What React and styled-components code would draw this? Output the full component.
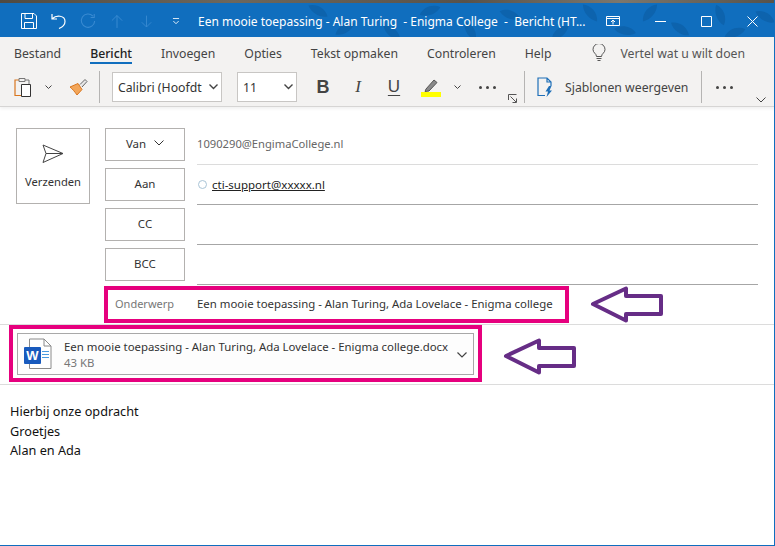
import React from "react";
import styled, { createGlobalStyle } from "styled-components";

const tabs = ["Bestand", "Bericht", "Invoegen", "Opties", "Tekst opmaken", "Controleren", "Help"];
const leaves = [
  [318, 8, 30], [345, 26, -30], [392, 30, 40], [430, 8, -20], [470, 28, 60], [510, 12, 20],
  [560, 30, -40], [590, 10, 50], [625, 28, 10], [650, 10, -50], [680, 26, 35], [720, 12, 70],
  [735, 30, -20], [765, 14, 30]
];

const App = () => {
  return (
    <Page>
      <GlobalStyle />
      <PhotoStrip />
      <TitleBar>
        <LeafLayer width="775" height="34" viewBox="0 0 775 34">
          {leaves.map(([x, y, r]) => (
            <path
              key={x}
              d="M-11 0C-5-6 5-6 11 0C5 5-5 5-11 0Z"
              fill="#0d63ad"
              transform={`translate(${x} ${y}) rotate(${r})`}
            />
          ))}
        </LeafLayer>
        <QuickIcons>
          <svg width="16" height="16" viewBox="0 0 16 16" fill="none" stroke="#fff">
            <path d="M.5.5H13L15.500 3V15.500H.5Z" />
            <path d="M4 .5V5.500H11.500V.5M3.500 15.500V9.500H12.500V15.500" />
          </svg>
          <svg width="15" height="16" viewBox="0 0 15 16" fill="none" stroke="#fff" strokeWidth="1.2">
            <path d="M1 1V6H6M1.500 5.500C5 2 14 2 14 8.500C14 11.500 11.500 14 8 15.500" />
          </svg>
          <svg width="16" height="16" viewBox="0 0 18 18" fill="none" stroke="#3a8bd2" strokeWidth="1.2">
            <path d="M14.500 3.500A7.500 7.500 0 1 0 16.500 9M16 1V5H12" />
          </svg>
          <svg width="12" height="15" viewBox="0 0 14 16" fill="none" stroke="#3a8bd2" strokeWidth="1.1">
            <path d="M7 15.500V1M1 7L7 1L13 7" />
          </svg>
          <svg width="11" height="15" viewBox="0 0 14 16" fill="none" stroke="#3a8bd2" strokeWidth="1.1">
            <path d="M7 .5V15M1 9L7 15L13 9" />
          </svg>
          <svg width="8" height="7" viewBox="0 0 9 8" fill="none" stroke="#fff">
            <path d="M1 .5H8M1.500 3.500L4.500 6.500L7.500 3.500" />
          </svg>
        </QuickIcons>
        <WindowTitle>{"Een mooie toepassing - Alan Turing  - Enigma College  -  Bericht (HT..."}</WindowTitle>
        <WindowIcons>
          <svg width="14" height="10" viewBox="0 0 14 10" fill="none" stroke="#fff">
            <path d="M.5.5H13.500V9.500H.5ZM.5 2.500H13.500M7 8.500V4M5 6L7 4L9 6" />
          </svg>
          <svg width="11" height="11" viewBox="0 0 11 11" stroke="#fff">
            <path d="M0 5.500H11" />
          </svg>
          <svg width="11" height="11" viewBox="0 0 11 11" fill="none" stroke="#fff">
            <path d="M.5.5H10.500V10.500H.5Z" />
          </svg>
          <svg width="11" height="11" viewBox="0 0 11 11" fill="none" stroke="#fff">
            <path d="M.5.5L10.500 10.500M10.500.5L.5 10.500" />
          </svg>
        </WindowIcons>
      </TitleBar>

      <Ribbon>
        <TabRow>
          {tabs.map(tab => (
            <Tab key={tab} $active={tab === "Bericht"}>
              {tab}
            </Tab>
          ))}
          <TellMe>
            <svg width="14" height="18" viewBox="0 0 14 18" fill="none" stroke="#444" strokeWidth="0.9">
              <path d="M4.500 12.500C4.500 9.500 1 9 1 5.500A6 6 0 0 1 13 5.500C13 9 9.500 9.500 9.500 12.500ZM4.500 14.500H9.500M5.500 16.500H8.500" />
            </svg>
            <span>Vertel wat u wilt doen</span>
          </TellMe>
        </TabRow>
        <ToolRow>
          <Slot $w={32}>
            <svg width="18" height="20" viewBox="0 0 18 20" fill="none">
              <path d="M5 3H1V18.500H7" stroke="#d9761e" strokeWidth="1.2" />
              <path d="M5 1.500H11V4.500H5ZM11 3H15V7" stroke="#777" />
              <path d="M7.500 7.500H16.500V19.500H7.500Z" stroke="#333" fill="#fff" />
            </svg>
          </Slot>
          <Slot $w={18}>
            <Caret />
          </Slot>
          <Slot $w={42}>
            <svg width="19" height="18" viewBox="0 0 19 18" fill="none">
              <path d="M1 9L9 5.500L13 11.500L8 17C6 14 3.500 11 1 9Z" fill="#f2a65a" stroke="#d9761e" />
              <path d="M11 6.500L16 1.500L18 3.500L13 9" stroke="#666" fill="#e6e6e6" />
            </svg>
          </Slot>
          <ToolDivider />
          <FontSelect $w={110} $left={12}>
            Calibri (Hoofdt
            <SelectCaret />
          </FontSelect>
          <FontSelect $w={60} $left={15}>
            11
            <SelectCaret />
          </FontSelect>
          <FormatKey $w={52} $bold>
            B
          </FormatKey>
          <FormatKey $w={18} $italic>
            I
          </FormatKey>
          <FormatKey $w={54} $underline>
            U
          </FormatKey>
          <Slot $w={20}>
            <svg width="20" height="20" viewBox="0 0 20 20" fill="none">
              <path d="M5 12L13 3L16 5.500L8 14L4 14.500Z" fill="#8a8a8a" stroke="#555" />
              <rect y="15" width="20" height="5" fill="#ffff00" />
            </svg>
          </Slot>
          <Slot $w={32}>
            <Caret />
          </Slot>
          <Dots $w={28} />
          <Launcher $w={23}>
            <svg width="9" height="9" viewBox="0 0 9 9" fill="none" stroke="#555">
              <path d="M.5 6V.5H8.500M2.500 2.500L8 8M4.500 8.500H8.500V4.500" />
            </svg>
          </Launcher>
          <ToolDivider />
          <Slot $w={40}>
            <svg width="16" height="21" viewBox="0 0 16 21" fill="none">
              <path d="M8 18.500H1V1H10L14 5V9M10 1V5H14" stroke="#1e6fb8" strokeWidth="1.2" />
              <path d="M12 9L8.500 14.500H11L9.500 20L15 13.500H12.500L14.500 9Z" fill="#1e6fb8" />
            </svg>
          </Slot>
          <TemplateLabel>Sjablonen weergeven</TemplateLabel>
          <ToolDivider />
          <Dots $w={44} />
          <RibbonCollapse>
            <svg width="10" height="6" viewBox="0 0 10 6" fill="none" stroke="#444">
              <path d="M.5.500L5 5L9.500.500" />
            </svg>
          </RibbonCollapse>
        </ToolRow>
      </Ribbon>

      <HeadFields>
        <SendButton>
          <svg width="22" height="20" viewBox="0 0 22 20" fill="none" stroke="#444">
            <path d="M1 1L21 9.500L1 18.500L4 9.500ZM4 9.500H21" />
          </svg>
          Verzenden
        </SendButton>
        <AddressRows>
          <AddressRow>
            <AddressButton>
              Van
              <svg width="10" height="6" viewBox="0 0 10 6" fill="none" stroke="#333">
                <path d="M.5.500L5 5L9.500.500" />
              </svg>
            </AddressButton>
            <AddressField $light>
              <FromText>1090290@EngimaCollege.nl</FromText>
            </AddressField>
          </AddressRow>
          <AddressRow>
            <AddressButton>Aan</AddressButton>
            <AddressField $low>
              <PresenceDot />
              <Recipient>cti-support@xxxxx.nl</Recipient>
            </AddressField>
          </AddressRow>
          <AddressRow>
            <AddressButton>CC</AddressButton>
            <AddressField />
          </AddressRow>
          <AddressRow>
            <AddressButton>BCC</AddressButton>
            <AddressField />
          </AddressRow>
        </AddressRows>
      </HeadFields>

      <SubjectRow>
        <SubjectBox>
          <SubjectLabel>Onderwerp</SubjectLabel>
          <span>Een mooie toepassing - Alan Turing, Ada Lovelace - Enigma college</span>
        </SubjectBox>
        <Arrow />
      </SubjectRow>

      <AttachmentRow>
        <AttachmentBox>
          <AttachmentCard>
            <WordIcon width="28" height="32" viewBox="0 0 28 32" fill="none">
              <path d="M5.500 1H20L27 8V30.500H5.500Z" fill="#fff" stroke="#8a8a8a" />
              <path d="M20 1V8H27" stroke="#8a8a8a" />
              <path d="M18 13.500H25M18 16.500H25M18 19.500H25" stroke="#4a9be0" />
              <rect y="9" width="17" height="17" rx="1" fill="#185abd" />
              <text x="8.500" y="22" textAnchor="middle" fill="#fff" fontSize="13" fontWeight="700" fontFamily="Liberation Sans, sans-serif">
                W
              </text>
            </WordIcon>
            <AttachmentText>
              <span>Een mooie toepassing - Alan Turing, Ada Lovelace - Enigma college.docx</span>
              <AttachmentSize>43 KB</AttachmentSize>
            </AttachmentText>
            <AttachmentCaret width="10" height="6" viewBox="0 0 10 6" fill="none" stroke="#444" strokeWidth="1.2">
              <path d="M.5.500L5 5L9.500.500" />
            </AttachmentCaret>
          </AttachmentCard>
        </AttachmentBox>
        <Arrow />
      </AttachmentRow>

      <MessageBody>
        <div>Hierbij onze opdracht</div>
        <div>Groetjes</div>
        <div>Alan en Ada</div>
      </MessageBody>
    </Page>
  );
};

const Arrow = () => (
  <ArrowSvg width="74" height="37" viewBox="0 0 74 37">
    <path d="M3 18L36 2.500V10H71V28H36V34.500Z" fill="#fff" stroke="#662d86" strokeWidth="4" strokeLinejoin="round" />
  </ArrowSvg>
);

const Caret = () => (
  <svg width="7" height="4" viewBox="0 0 7 4" fill="none" stroke="#444">
    <path d="M.5.500L3.500 3.500L6.500.500" />
  </svg>
);

const SelectCaret = () => (
  <SelectCaretWrap>
    <svg width="9" height="6" viewBox="0 0 9 6" fill="none" stroke="#444" strokeWidth="1.4">
      <path d="M.5.500L4.500 4.500L8.500.500" />
    </svg>
  </SelectCaretWrap>
);

const Dots = ({ $w }) => (
  <Slot $w={$w}>
    <DotRow>
      <i />
      <i />
      <i />
    </DotRow>
  </Slot>
);

export default App;

const GlobalStyle = createGlobalStyle`
  html, body {
    margin: 0;
    padding: 0;
    background: #fff;
  }
`;

const Page = styled.div`
  width: 775px;
  height: 546px;
  box-sizing: border-box;
  overflow: hidden;
  display: flex;
  flex-direction: column;
  background: #fff;
  border-right: 1px solid #106ebe;
  border-bottom: 1px solid #106ebe;
  font-family: "Noto Sans", sans-serif;
  font-size: 12px;
  color: #333;
`;

const PhotoStrip = styled.div`
  height: 3px;
  margin-right: -1px;
  background: linear-gradient(90deg, #4f4a42, #6d675c 30%, #58524a 60%, #7c776d 80%, #57524a);
`;

const TitleBar = styled.div`
  position: relative;
  height: 34px;
  box-sizing: border-box;
  padding-top: 2px;
  margin-right: -1px;
  display: flex;
  align-items: center;
  background: #106ebe;
  color: #fff;
`;

const LeafLayer = styled.svg`
  position: absolute;
  left: 0;
  top: 0;
`;

const QuickIcons = styled.div`
  position: relative;
  width: 198px;
  padding-left: 21px;
  box-sizing: border-box;
  display: flex;
  align-items: center;
  gap: 14px;
  flex: none;

  svg:nth-child(3) { margin-left: 0; }
  svg:nth-child(4) { margin-left: 1px; }
  svg:nth-child(5) { margin-left: 4px; }
  svg:nth-child(6) { margin-left: 6px; }
`;

const WindowTitle = styled.div`
  position: relative;
  width: 408px;
  flex: none;
  white-space: pre;
  font-size: 12px;
`;

const WindowIcons = styled.div`
  position: relative;
  display: flex;
  align-items: center;
  gap: 35px;
`;

const Ribbon = styled.div`
  height: 70px;
  flex: none;
  background: #f3f2f1;
  border-bottom: 1px solid #d6d5d4;
  box-shadow: 0 2px 3px rgba(0, 0, 0, 0.06);
  box-sizing: border-box;
  margin-right: -1px;
`;

const TabRow = styled.div`
  height: 31px;
  box-sizing: border-box;
  padding: 1px 0 0 14px;
  display: flex;
  align-items: center;
  gap: 29px;
`;

const Tab = styled.div`
  position: relative;
  font-size: 12.250px;
  color: ${p => (p.$active ? "#222" : "#444")};
  font-weight: ${p => (p.$active ? 500 : 400)};

  &::after {
    content: "";
    display: ${p => (p.$active ? "block" : "none")};
    position: absolute;
    left: 0;
    right: 0;
    bottom: -2px;
    height: 2px;
    background: #106ebe;
  }
`;

const TellMe = styled.div`
  margin-left: 12px;
  display: flex;
  align-items: center;
  gap: 14px;
  color: #555;
  font-size: 12.250px;
`;

const ToolRow = styled.div`
  position: relative;
  height: 38px;
  display: flex;
  align-items: center;
  padding-left: 7px;
`;

const Slot = styled.div`
  width: ${p => p.$w}px;
  flex: none;
  display: flex;
  align-items: center;
  justify-content: center;
`;

const ToolDivider = styled.div`
  width: 1px;
  height: 32px;
  flex: none;
  background: #b5b4b3;
`;

const FontSelect = styled.div`
  width: ${p => p.$w}px;
  height: 30px;
  flex: none;
  box-sizing: border-box;
  margin-left: ${p => p.$left}px;
  padding-left: 5px;
  display: flex;
  align-items: center;
  justify-content: space-between;
  background: #fff;
  border: 1px solid #c8c6c4;
  font-size: 12.250px;
  color: #333;
  white-space: nowrap;
  overflow: hidden;
`;

const SelectCaretWrap = styled.span`
  display: flex;
  padding: 0 3px;
`;

const FormatKey = styled.div`
  width: ${p => p.$w}px;
  flex: none;
  text-align: center;
  font-size: ${p => (p.$bold ? "18px" : "17px")};
  font-weight: ${p => (p.$bold ? 700 : 400)};
  font-style: ${p => (p.$italic ? "italic" : "normal")};
  font-family: ${p => (p.$italic ? '"Liberation Serif", serif' : '"Liberation Sans", sans-serif')};
  text-decoration: ${p => (p.$underline ? "underline" : "none")};
  text-underline-offset: 3px;
  color: #444;
`;

const DotRow = styled.div`
  display: flex;
  gap: 4px;

  i {
    width: 3px;
    height: 3px;
    border-radius: 50%;
    background: #444;
  }
`;

const Launcher = styled.div`
  width: ${p => p.$w}px;
  height: 32px;
  flex: none;
  display: flex;
  align-items: flex-end;
  justify-content: center;
`;

const TemplateLabel = styled.div`
  width: 136px;
  flex: none;
  font-size: 12.250px;
  color: #444;
  white-space: nowrap;
`;

const RibbonCollapse = styled.div`
  position: absolute;
  right: 9px;
  bottom: 3px;
  display: flex;
`;

const HeadFields = styled.div`
  display: flex;
  padding: 21px 0 0 16px;
`;

const SendButton = styled.div`
  width: 74px;
  height: 76px;
  flex: none;
  box-sizing: border-box;
  margin-right: 15px;
  padding-top: 15px;
  display: flex;
  flex-direction: column;
  align-items: center;
  gap: 10px;
  border: 1px solid #b3b1af;
  font-size: 11.200px;
  color: #333;
`;

const AddressRows = styled.div`
  display: flex;
  flex-direction: column;
  gap: 3px;
`;

const AddressRow = styled.div`
  display: flex;
  gap: 12px;
`;

const AddressButton = styled.div`
  width: 80px;
  height: 33px;
  flex: none;
  box-sizing: border-box;
  padding-bottom: 3px;
  display: flex;
  align-items: center;
  justify-content: center;
  gap: 8px;
  border: 1px solid #b3b1af;
  font-size: 11.500px;
  color: #333;
`;

const AddressField = styled.div`
  width: 561px;
  height: 37px;
  box-sizing: border-box;
  padding-bottom: ${p => (p.$low ? 3 : 5)}px;
  display: flex;
  align-items: center;
  border-bottom: 1px solid ${p => (p.$light ? "#dcdcdc" : "#a6a6a6")};
`;

const FromText = styled.span`
  color: #666;
  font-size: 11.200px;
`;

const PresenceDot = styled.span`
  width: 9px;
  height: 9px;
  box-sizing: border-box;
  margin: 0 5px 0 1px;
  border: 1px solid #a9c4d6;
  border-radius: 50%;
`;

const Recipient = styled.span`
  font-size: 11.500px;
  color: #222;
  text-decoration: underline;
`;

const SubjectRow = styled.div`
  height: 39px;
  flex: none;
  margin: 1px -1px 0 0;
  padding-left: 104px;
  box-sizing: border-box;
  display: flex;
  align-items: flex-start;
  gap: 21px;
  border-bottom: 1px solid #dcdcdc;
`;

const SubjectBox = styled.div`
  width: 465px;
  height: 37px;
  flex: none;
  box-sizing: border-box;
  padding: 0 0 2px 7px;
  display: flex;
  align-items: center;
  border: 4px solid #e6007e;
  font-size: 11.400px;
  color: #333;
  white-space: nowrap;
`;

const SubjectLabel = styled.span`
  width: 82px;
  flex: none;
  font-size: 11px;
  color: #777;
`;

const AttachmentRow = styled.div`
  height: 60px;
  flex: none;
  margin-right: -1px;
  padding-left: 9px;
  box-sizing: border-box;
  display: flex;
  align-items: flex-start;
  gap: 21px;
  border-bottom: 1px solid #dcdcdc;

  > svg {
    margin-top: 13px;
  }
`;

const AttachmentBox = styled.div`
  width: 473px;
  height: 57px;
  flex: none;
  box-sizing: border-box;
  padding: 4px;
  border: 4px solid #e6007e;
`;

const AttachmentCard = styled.div`
  height: 42px;
  box-sizing: border-box;
  padding: 0 6px;
  display: flex;
  align-items: center;
  border: 1px solid #a8a8a8;
  background: #fdfdfd;
  font-size: 11.400px;
  color: #333;
`;

const WordIcon = styled.svg`
  flex: none;
  margin-right: 12px;
`;

const AttachmentCaret = styled.svg`
  flex: none;
  margin: 2px 0 0 auto;
`;

const AttachmentText = styled.div`
  flex: none;
  display: flex;
  flex-direction: column;
  padding-top: 1px;
  line-height: 16px;
  white-space: nowrap;
`;

const AttachmentSize = styled.span`
  color: #777;
`;

const ArrowSvg = styled.svg`
  flex: none;
`;

const MessageBody = styled.div`
  padding: 17px 0 0 10px;
  font-size: 12.700px;
  line-height: 19.500px;
  color: #111;
`;
